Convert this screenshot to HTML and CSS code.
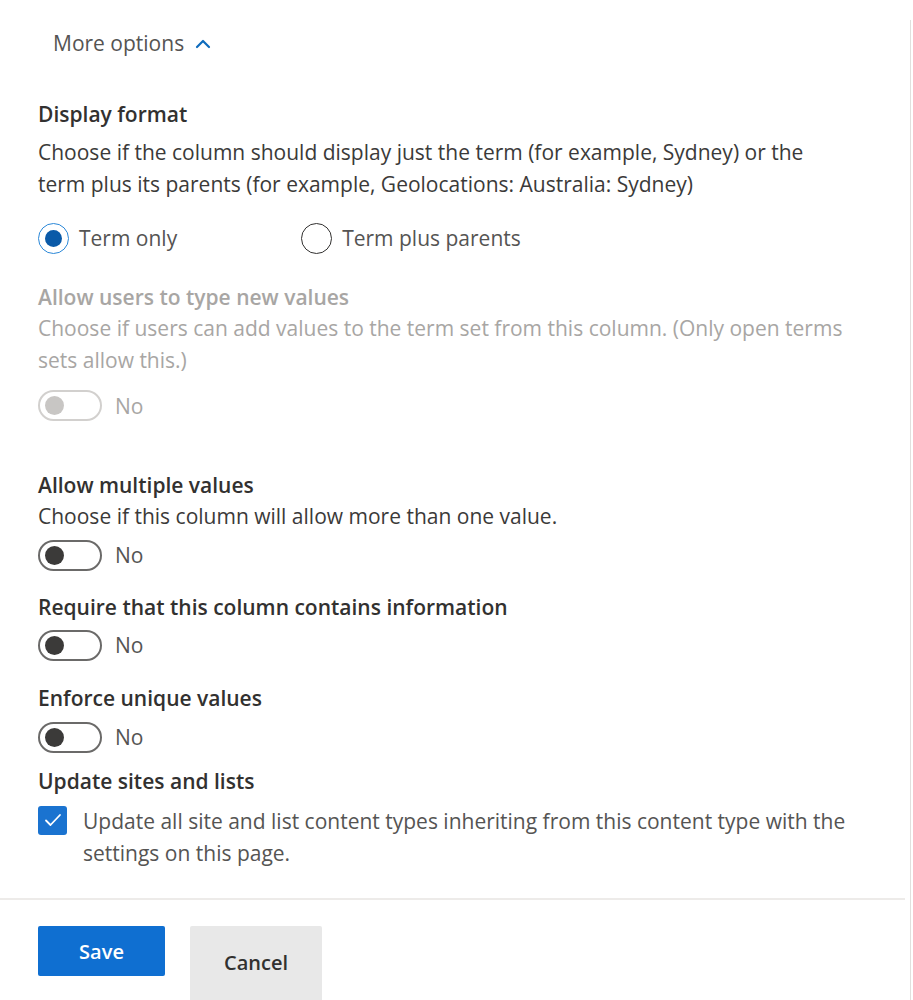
FILE: index.html
```html
<!DOCTYPE html>
<html lang="en">
<head>
<meta charset="utf-8">
<title>Column settings</title>
<link rel="stylesheet" href="styles.css">
</head>
<body>
<div class="panel">
  <div class="more-options">
    <span>More options</span>
    <svg class="chevron" width="16" height="10" viewBox="0 0 16 10"><path d="M2 8 L8 2 L14 8" fill="none" stroke="#0f6cbd" stroke-width="2.2" stroke-linecap="round" stroke-linejoin="round"/></svg>
  </div>

  <div class="content">
    <section class="sec sec-display">
      <h3 class="label">Display format</h3>
      <p class="desc">Choose if the column should display just the term (for example, Sydney) or the term plus its parents (for example, Geolocations: Australia: Sydney)</p>
      <div class="radios">
        <label class="radio checked"><span class="circle"><span class="dot"></span></span><span>Term only</span></label>
        <label class="radio"><span class="circle"></span><span>Term plus parents</span></label>
      </div>
    </section>

    <section class="sec sec-disabled disabled">
      <h3 class="label">Allow users to type new values</h3>
      <p class="desc">Choose if users can add values to the term set from this column. (Only open terms sets allow this.)</p>
      <div class="toggle-row"><span class="toggle"><span class="knob"></span></span><span class="toggle-text">No</span></div>
    </section>

    <section class="sec sec-multi">
      <h3 class="label">Allow multiple values</h3>
      <p class="desc">Choose if this column will allow more than one value.</p>
      <div class="toggle-row"><span class="toggle"><span class="knob"></span></span><span class="toggle-text">No</span></div>
    </section>

    <section class="sec sec-require">
      <h3 class="label">Require that this column contains information</h3>
      <div class="toggle-row"><span class="toggle"><span class="knob"></span></span><span class="toggle-text">No</span></div>
    </section>

    <section class="sec sec-unique">
      <h3 class="label">Enforce unique values</h3>
      <div class="toggle-row"><span class="toggle"><span class="knob"></span></span><span class="toggle-text">No</span></div>
    </section>

    <section class="sec sec-update">
      <h3 class="label">Update sites and lists</h3>
      <label class="check-row">
        <span class="checkbox"><svg width="18" height="14" viewBox="0 0 18 14"><path d="M2 7.5 L6.5 12 L16 2" fill="none" stroke="#fff" stroke-width="1.8" stroke-linecap="round" stroke-linejoin="round"/></svg></span>
        <span class="check-text">Update all site and list content types inheriting from this content type with the settings on this page.</span>
      </label>
    </section>
  </div>

  <div class="footer">
    <button class="btn primary">Save</button>
    <button class="btn secondary">Cancel</button>
  </div>
</div>
</body>
</html>
```
FILE: styles.css
```css
html, body {
  margin: 0;
  padding: 0;
  background: #ffffff;
}

body {
  font-family: "Open Sans", "Noto Sans", "Liberation Sans", sans-serif;
  font-size: 21px;
  color: #323130;
  width: 913px;
  height: 1000px;
  overflow: hidden;
}

.panel {
  position: relative;
  height: 1000px;
}

.panel::after {
  content: "";
  position: absolute;
  right: 2px;
  top: 20px;
  bottom: 0;
  width: 1px;
  background: #e1dfdd;
}

.more-options {
  display: flex;
  align-items: center;
  gap: 11px;
  padding: 27px 0 0 53px;
  height: 32px;
  color: #555453;
}

.chevron {
  margin-top: 1px;
}

.content {
  padding: 0 63px 0 38px;
}

.label {
  margin: 0;
  font-size: 21px;
  font-weight: 600;
  line-height: 31px;
  color: #323130;
}

.desc {
  margin: 0;
  line-height: 31.5px;
  color: #3b3a39;
}

.sec-display { margin-top: 40px; }
.sec-display .desc { margin-top: 7px; }

.radios {
  display: flex;
  margin-top: 22px;
  height: 32px;
  align-items: center;
}

.radio {
  display: flex;
  align-items: center;
  gap: 10px;
  color: #555453;
}

.radio + .radio { margin-left: 124px; }

.circle {
  box-sizing: border-box;
  width: 31px;
  height: 31px;
  border: 1.5px solid #323130;
  border-radius: 50%;
  display: flex;
  align-items: center;
  justify-content: center;
}

.radio.checked .circle {
  border-color: #2b88d8;
}

.dot {
  width: 17px;
  height: 17px;
  border-radius: 50%;
  background: #0a5aa8;
}

.sec-disabled { margin-top: 28px; }
.disabled .label,
.disabled .desc,
.disabled .toggle-text { color: #a8a6a4; }

.toggle-row {
  display: flex;
  align-items: center;
  gap: 13px;
  height: 31px;
}

.sec-disabled .toggle-row { margin-top: 14px; }

.toggle {
  box-sizing: border-box;
  width: 64px;
  height: 31px;
  border: 2px solid #6b6a69;
  border-radius: 16px;
  display: flex;
  align-items: center;
  padding-left: 5px;
}

.knob {
  width: 19px;
  height: 19px;
  border-radius: 50%;
  background: #3b3a39;
}

.disabled .toggle { border-color: #d2d0ce; }
.disabled .knob { background: #c8c6c4; }

.toggle-text { color: #555453; }

.sec-multi { margin-top: 49px; }
.sec-multi .toggle-row { margin-top: 7px; }

.sec-require { margin-top: 21px; }
.sec-require .toggle-row { margin-top: 7px; }

.sec-unique { margin-top: 22px; }
.sec-unique .toggle-row { margin-top: 8px; }

.sec-update { margin-top: 13px; }

.check-row {
  display: flex;
  align-items: flex-start;
  gap: 16px;
  margin-top: 8px;
}

.checkbox {
  flex: none;
  box-sizing: border-box;
  width: 29px;
  height: 29px;
  margin-top: 1px;
  background: #1a73d0;
  border-radius: 3px;
  display: flex;
  align-items: center;
  justify-content: center;
}

.check-text {
  line-height: 32px;
  color: #555453;
}

.footer {
  position: absolute;
  left: 0;
  right: 8px;
  top: 898px;
  bottom: 0;
  border-top: 2px solid #edebe9;
  display: flex;
  align-items: flex-start;
  padding: 26px 0 0 38px;
  gap: 25px;
}

.btn {
  font-family: inherit;
  font-size: 20px;
  font-weight: 600;
  border: 0;
  border-radius: 2px;
  cursor: pointer;
}

.primary {
  width: 127px;
  height: 50px;
  background: #0f6fd1;
  color: #ffffff;
}

.secondary {
  width: 132px;
  height: 80px;
  background: #e8e8e8;
  color: #323130;
  padding-bottom: 8px;
}
```
